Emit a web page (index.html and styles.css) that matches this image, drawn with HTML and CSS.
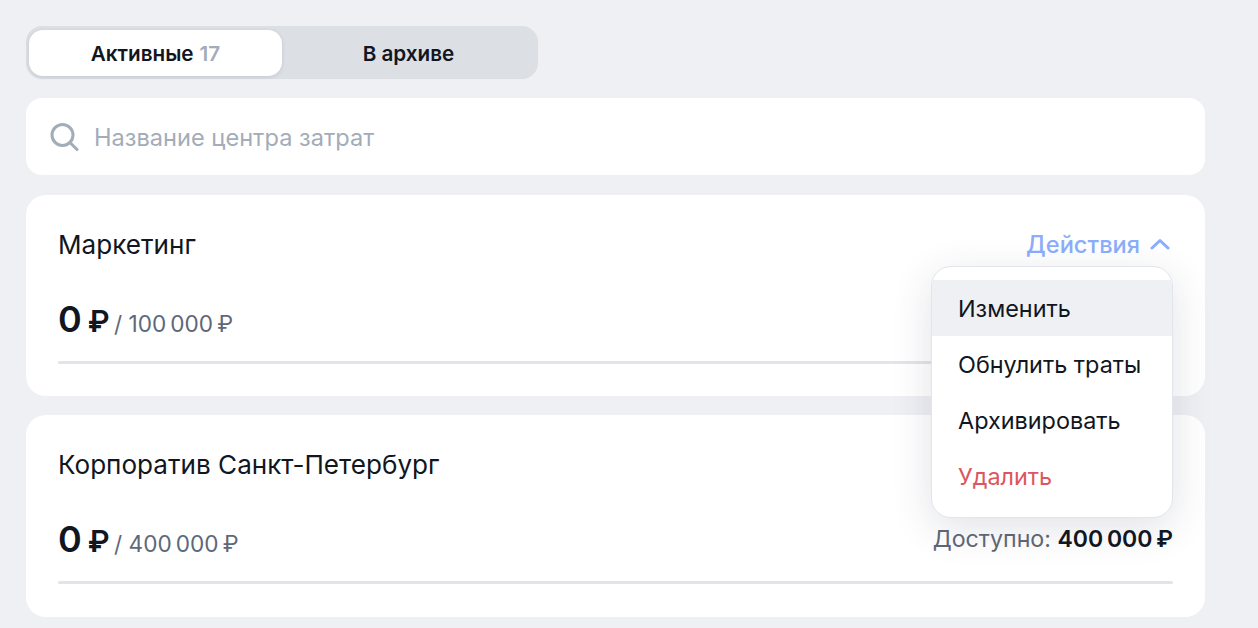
FILE: index.html
```html
<!DOCTYPE html>
<html lang="ru">
<head>
    <meta charset="UTF-8">
    <meta name="viewport" content="width=device-width, initial-scale=1.0">
    <title>Центры затрат</title>
    <link rel="stylesheet" href="styles.css">
</head>
<body>
    <div class="page">
        <div class="tabs">
            <div class="tab tab-active">Активные <span class="tab-count">17</span></div>
            <div class="tab">В архиве</div>
        </div>

        <div class="search">
            <svg class="search-icon" width="30" height="30" viewBox="0 0 30 30" fill="none">
                <circle cx="13.5" cy="13" r="10.5" stroke="#a3acb9" stroke-width="3"/>
                <path d="M21 20.5L28 27.5" stroke="#a3acb9" stroke-width="3" stroke-linecap="round"/>
            </svg>
            <span class="search-text">Название центра затрат</span>
        </div>

        <div class="card">
            <div class="card-top">
                <div class="card-title">Маркетинг</div>
                <div class="actions">
                    <div class="actions-toggle actions-open">
                        Действия
                        <svg width="20" height="12" viewBox="0 0 20 12" fill="none">
                            <path d="M2 10L10 2.500L18 10" stroke="#8aaefc" stroke-width="3" stroke-linecap="round" stroke-linejoin="round"/>
                        </svg>
                    </div>
                    <div class="menu">
                        <div class="menu-item menu-item-hover">Изменить</div>
                        <div class="menu-item">Обнулить траты</div>
                        <div class="menu-item">Архивировать</div>
                        <div class="menu-item menu-item-danger">Удалить</div>
                    </div>
                </div>
            </div>
            <div class="card-sums">
                <div class="spent"><span class="spent-value">0&#8201;<span class="spent-currency">₽</span></span> <span class="limit">/ 100&#8201;000&#8201;₽</span></div>
            </div>
            <div class="bar"></div>
        </div>

        <div class="card">
            <div class="card-top">
                <div class="card-title">Корпоратив Санкт-Петербург</div>
            </div>
            <div class="card-sums">
                <div class="spent"><span class="spent-value">0&#8201;<span class="spent-currency">₽</span></span> <span class="limit">/ 400&#8201;000&#8201;₽</span></div>
                <div class="available">Доступно: <b>400&#8201;000&#8201;₽</b></div>
            </div>
            <div class="bar"></div>
        </div>
    </div>
</body>
</html>
```

FILE: styles.css
```css
* {
    box-sizing: border-box;
}

body {
    margin: 0;
    background: #eff0f4;
    color: #11161f;
    font-family: Inter, 'Noto Sans', sans-serif;
    overflow: hidden;
}

.page {
    width: 1179px;
    margin-left: 26px;
    padding-top: 26px;
    display: flex;
    flex-direction: column;
}

.tabs {
    width: 512px;
    height: 53px;
    padding: 4px 3px 3px;
    display: flex;
    background: #dcdfe4;
    border-radius: 16px;
}

.tab {
    width: 253px;
    height: 46px;
    display: flex;
    align-items: center;
    justify-content: center;
    gap: 6px;
    font-size: 20.7px;
    font-weight: 600;
    border-radius: 14px;
}

.tab + .tab {
    flex: 1;
}

.tab-active {
    background: #fff;
    box-shadow: 0 1px 4px rgba(30, 40, 70, 0.12);
}

.tab-count {
    color: #a3acb9;
    font-weight: 600;
}

.search {
    height: 77px;
    margin-top: 19px;
    padding: 1px 0 0 23px;
    display: flex;
    align-items: center;
    gap: 15px;
    background: #fff;
    border-radius: 16px;
}

.search-icon {
    margin-top: -1px;
}

.search-text {
    color: #a3acb9;
    font-size: 23.6px;
}

.card {
    height: 201px;
    margin-top: 20px;
    padding: 32px 32px 0 32px;
    background: #fff;
    border-radius: 20px;
}

.card + .card {
    height: 202px;
    margin-top: 19px;
}

.card-top {
    height: 34px;
    display: flex;
    align-items: center;
    justify-content: space-between;
}

.card-title {
    font-size: 26.1px;
}

.actions {
    position: relative;
    z-index: 1;
}

.actions-toggle {
    display: flex;
    align-items: center;
    gap: 10px;
    padding-right: 3px;
    color: #8aaefc;
    font-size: 23.6px;
    font-weight: 500;
}

.menu {
    position: absolute;
    top: 36px;
    right: 0;
    width: 242px;
    height: 252px;
    padding: 13px 0 12px;
    background: #fff;
    border: 1px solid #e3e5ec;
    border-radius: 20px;
    box-shadow: 0 10px 40px rgba(40, 50, 80, 0.14);
}

.menu-item {
    height: 56px;
    padding: 1px 0 0 26px;
    display: flex;
    align-items: center;
    font-size: 23.4px;
}

.menu-item-hover {
    background: #eff0f4;
}

.menu-item-danger {
    color: #dd5560;
}

.card-sums {
    margin-top: 35px;
    height: 46px;
    display: flex;
    align-items: center;
    justify-content: space-between;
}

.spent-value {
    font-size: 36px;
    font-weight: 600;
}

.spent-currency {
    font-size: 30px;
}

.limit {
    color: #5f6878;
    font-size: 22.6px;
}

.available {
    color: #5f6878;
    font-size: 23.2px;
}

.available b {
    color: #11161f;
    font-weight: 600;
    font-size: 23px;
}

.bar {
    height: 3px;
    margin-top: 19px;
    background: #e2e4e9;
    border-radius: 2px;
}
```
